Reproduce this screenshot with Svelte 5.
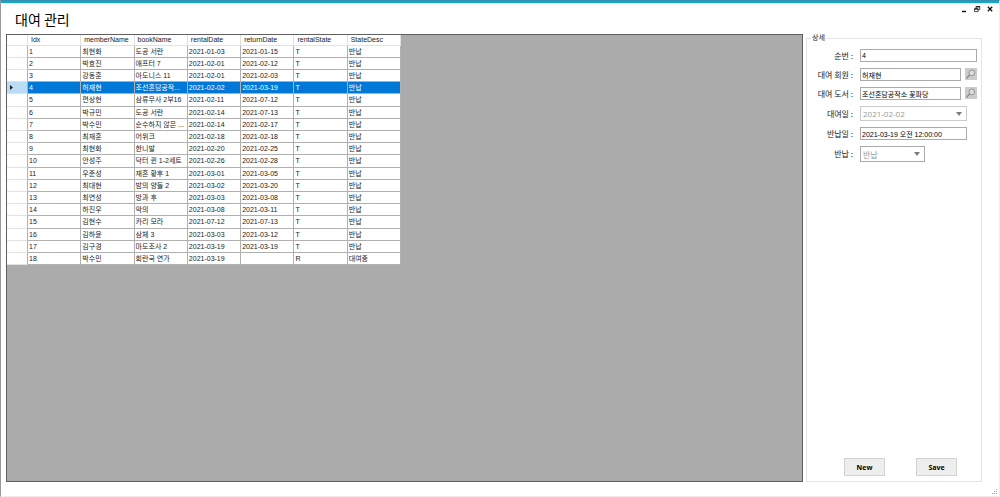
<script>
  const columns = ['Idx', 'memberName', 'bookName', 'rentalDate', 'returnDate', 'rentalState', 'StateDesc'];
  const rows = [
    [1, '최현화', '도공 서란', '2021-01-03', '2021-01-15', 'T', '반납'],
    [2, '박효진', '애프터 7', '2021-02-01', '2021-02-12', 'T', '반납'],
    [3, '강동훈', '아도니스 11', '2021-02-01', '2021-02-03', 'T', '반납'],
    [4, '허재현', '조선혼담공작...', '2021-02-02', '2021-03-19', 'T', '반납'],
    [5, '편상현', '삼류무사 2부16', '2021-02-11', '2021-07-12', 'T', '반납'],
    [6, '박규민', '도공 서란', '2021-02-14', '2021-07-13', 'T', '반납'],
    [7, '박수민', '순수하지 않은 ...', '2021-02-14', '2021-02-17', 'T', '반납'],
    [8, '최재훈', '어위크', '2021-02-18', '2021-02-18', 'T', '반납'],
    [9, '최현화', '한니발', '2021-02-20', '2021-02-25', 'T', '반납'],
    [10, '안성주', '닥터 퀸 1-2세트', '2021-02-26', '2021-02-28', 'T', '반납'],
    [11, '우준성', '재혼 황후 1', '2021-03-01', '2021-03-05', 'T', '반납'],
    [12, '최대현', '밤의 양들 2', '2021-03-02', '2021-03-20', 'T', '반납'],
    [13, '최연성', '방과 후', '2021-03-03', '2021-03-08', 'T', '반납'],
    [14, '하진우', '악의', '2021-03-08', '2021-03-11', 'T', '반납'],
    [15, '김현수', '카리 모라', '2021-07-12', '2021-07-13', 'T', '반납'],
    [16, '김하윤', '삼체 3', '2021-03-03', '2021-03-12', 'T', '반납'],
    [17, '김구경', '마도조사 2', '2021-03-19', '2021-03-19', 'T', '반납'],
    [18, '박수민', '회란국 연가', '2021-03-19', '', 'R', '대여중']
  ];
  let selected = $state(4);
</script>

{#snippet lens()}
  <svg viewBox="0 0 12 12" aria-hidden="true">
    <circle cx="6.8" cy="4.9" r="2.9" fill="#dcdcdc" stroke="#8c8c8c" stroke-width="0.9" />
    <path d="M4.6 7.1 2 9.8" stroke="#858585" stroke-width="1.3" stroke-linecap="round" />
  </svg>
{/snippet}

{#snippet arrow()}
  <svg class="arrow" viewBox="0 0 6 4" aria-hidden="true"><path d="M0 0h6L3 4z" fill="#7c7c7c" /></svg>
{/snippet}

<div class="window">
  <header>
    <h1>대여 관리</h1>
    <div class="controls">
      <button aria-label="최소화"><svg viewBox="0 0 8 8"><path d="M2 6.5h4" stroke="#111" stroke-width="1.4" /></svg></button>
      <button aria-label="이전 크기로"><svg viewBox="0 0 8 8" fill="none" stroke="#222" stroke-width="0.8"><path d="M1.5 4h3.6v2.6H1.5zM3 4V1.8h3.8v2.9H5.1" /><path d="M1.3 3.9h4M2.8 1.7h4.2" stroke-width="1.3" /></svg></button>
      <button aria-label="닫기"><svg viewBox="0 0 8 8"><path d="m1.8 1.8 4.4 4.4m0-4.4L1.8 6.2" stroke="#111" stroke-width="1.3" /></svg></button>
    </div>
  </header>

  <main>
    <section class="grid">
      <table>
        <colgroup>
          <col class="marker" />
          {#each columns as _}<col />{/each}
        </colgroup>
        <thead>
          <tr><th></th>{#each columns as c}<th>{c}</th>{/each}</tr>
        </thead>
        <tbody>
          {#each rows as row}
            <tr class:selected={row[0] === selected} onclick={() => (selected = row[0])}>
              <th>
                {#if row[0] === selected}<svg viewBox="0 0 3 5" aria-hidden="true"><path d="M0 0v5l3-2.5z" fill="#222" /></svg>{/if}
              </th>
              {#each row as cell}<td>{cell}</td>{/each}
            </tr>
          {/each}
        </tbody>
      </table>
    </section>

    <fieldset>
      <legend>상세</legend>
      <form onsubmit={(e) => e.preventDefault()}>
        <label for="idx">순번 :</label>
        <input id="idx" value="4" />
        <label for="member">대여 회원 :</label>
        <div class="lookup"><input id="member" value="허재현" /><button type="button" aria-label="회원 검색">{@render lens()}</button></div>
        <label for="book">대여 도서 :</label>
        <div class="lookup"><input id="book" value="조선혼담공작소 꽃파당" /><button type="button" aria-label="도서 검색">{@render lens()}</button></div>
        <label for="rental">대여일 :</label>
        <div class="combo"><select id="rental" disabled><option>2021-02-02</option></select>{@render arrow()}</div>
        <label for="return">반납일 :</label>
        <input id="return" class="date" value="2021-03-19 오전 12:00:00" />
        <label for="state">반납 :</label>
        <div class="combo short"><select id="state" disabled><option>반납</option></select>{@render arrow()}</div>
      </form>
      <div class="actions"><button>New</button><button>Save</button></div>
    </fieldset>
  </main>

  <footer>
    <svg viewBox="0 0 6 6" fill="#a0a0a0" aria-hidden="true"><path d="M5 0h1v1H5zM5 2h1v1H5zM5 4h1v1H5zM3 2h1v1H3zM3 4h1v1H3zM1 4h1v1H1z" /></svg>
  </footer>
</div>

<style>
  :global(body) { margin: 0; background: #fff; }
  .window {
    box-sizing: border-box;
    min-height: 100vh;
    display: flex;
    flex-direction: column;
    border-left: 1px solid #999;
    border-right: 1px solid #eee;
    border-bottom: 1px solid #eee;
    border-top: 1px solid #3590b0;
    background: #fff;
    font-family: "Liberation Sans", "Noto Sans CJK KR", sans-serif;
    font-size: 7px;
    color: #222;
  }
  header {
    box-sizing: border-box;
    height: 33px;
    display: flex;
    justify-content: space-between;
    border-top: 2px solid #05acd8;
    padding: 0 5px 0 14px;
  }
  h1 {
    margin: 0;
    padding-top: 6px;
    font: 400 14px/20px "Noto Sans CJK KR", sans-serif;
    color: #000;
  }
  button { font: inherit; padding: 0; }
  svg { display: block; }
  .controls { display: flex; gap: 5px; padding-top: 2px; }
  .controls button { width: 8px; height: 8px; border: 0; background: none; }
  .controls svg { width: 8px; height: 8px; }
  main { flex: 1; display: flex; gap: 3px; padding: 0 17px 0 5px; }
  .grid { flex: 1; border: 1px solid #606060; background: #ababab; }
  table {
    width: 394px;
    table-layout: fixed;
    border-collapse: separate;
    border-spacing: 0;
    background: #fff;
  }
  .marker { width: 21px; }
  th, td {
    box-sizing: border-box;
    padding: 0 0 0 1px;
    border-right: 1px solid #b0b0b0;
    border-bottom: 1px solid #b0b0b0;
    overflow: hidden;
    white-space: nowrap;
    text-align: left;
    font-weight: 400;
    line-height: 10px;
  }
  tr { height: 12px; }
  tbody tr:nth-child(5n) { height: 13px; }
  thead tr { height: 11px; }
  thead th { padding-left: 3px; border-color: #e2e2e2; }
  tbody th { padding-left: 3px; border-bottom-color: #e2e2e2; }
  tbody th svg { width: 3px; height: 5px; }
  .selected td { background: #0078d7; color: #fff; }
  .selected th { background: #bcdcf4; }
  fieldset {
    box-sizing: border-box;
    width: 176px;
    min-width: 0;
    margin: 0;
    border: 1px solid #e4e4e4;
    padding: 0 4px 5px;
    display: flex;
    flex-direction: column;
    justify-content: space-between;
  }
  legend { padding: 0 1px; line-height: 8px; }
  form {
    display: grid;
    grid-template-columns: 42px 1fr;
    grid-template-rows: 13px 13px 13px 15px 13px 16px;
    gap: 6px 7px;
    padding-top: 7px;
  }
  label {
    align-self: center;
    text-align: right;
    white-space: nowrap;
    font: 8px/12px "Noto Sans CJK KR", sans-serif;
  }
  input {
    box-sizing: border-box;
    width: 100%;
    min-width: 0;
    height: 13px;
    border: 1px solid #aaa;
    padding: 0 1px;
    font: inherit;
    color: #000;
    background: #fff;
  }
  .date { width: 107px; }
  .lookup { display: flex; gap: 4px; }
  .lookup input { flex: 1; }
  .lookup button {
    flex: none;
    width: 12px;
    height: 12px;
    border: 0;
    background: #ccc;
  }
  .lookup svg { width: 12px; height: 12px; }
  .combo { position: relative; width: 107px; }
  .short { width: 65px; }
  select {
    display: block;
    box-sizing: border-box;
    width: 100%;
    height: 100%;
    appearance: none;
    border: 1px solid #ccc;
    border-radius: 0;
    padding: 0 2px;
    background: #fff;
    color: #999;
    opacity: 1;
    font: 8px "Open Sans", "Noto Sans CJK KR", sans-serif;
  }
  .short select { border-color: #aaa; }
  .arrow { position: absolute; right: 5px; top: 6px; width: 6px; height: 4px; }
  .actions { display: flex; justify-content: flex-end; gap: 31px; padding-right: 20px; }
  .actions button {
    width: 41px;
    height: 18px;
    border: 1px solid #d2d2d2;
    background: #eee;
    color: #000;
    font: 700 7px "Open Sans", sans-serif;
  }
  footer { height: 13px; display: flex; justify-content: flex-end; align-items: flex-end; padding: 0 2px 1px 0; }
  footer svg { width: 6px; height: 6px; }
</style>
